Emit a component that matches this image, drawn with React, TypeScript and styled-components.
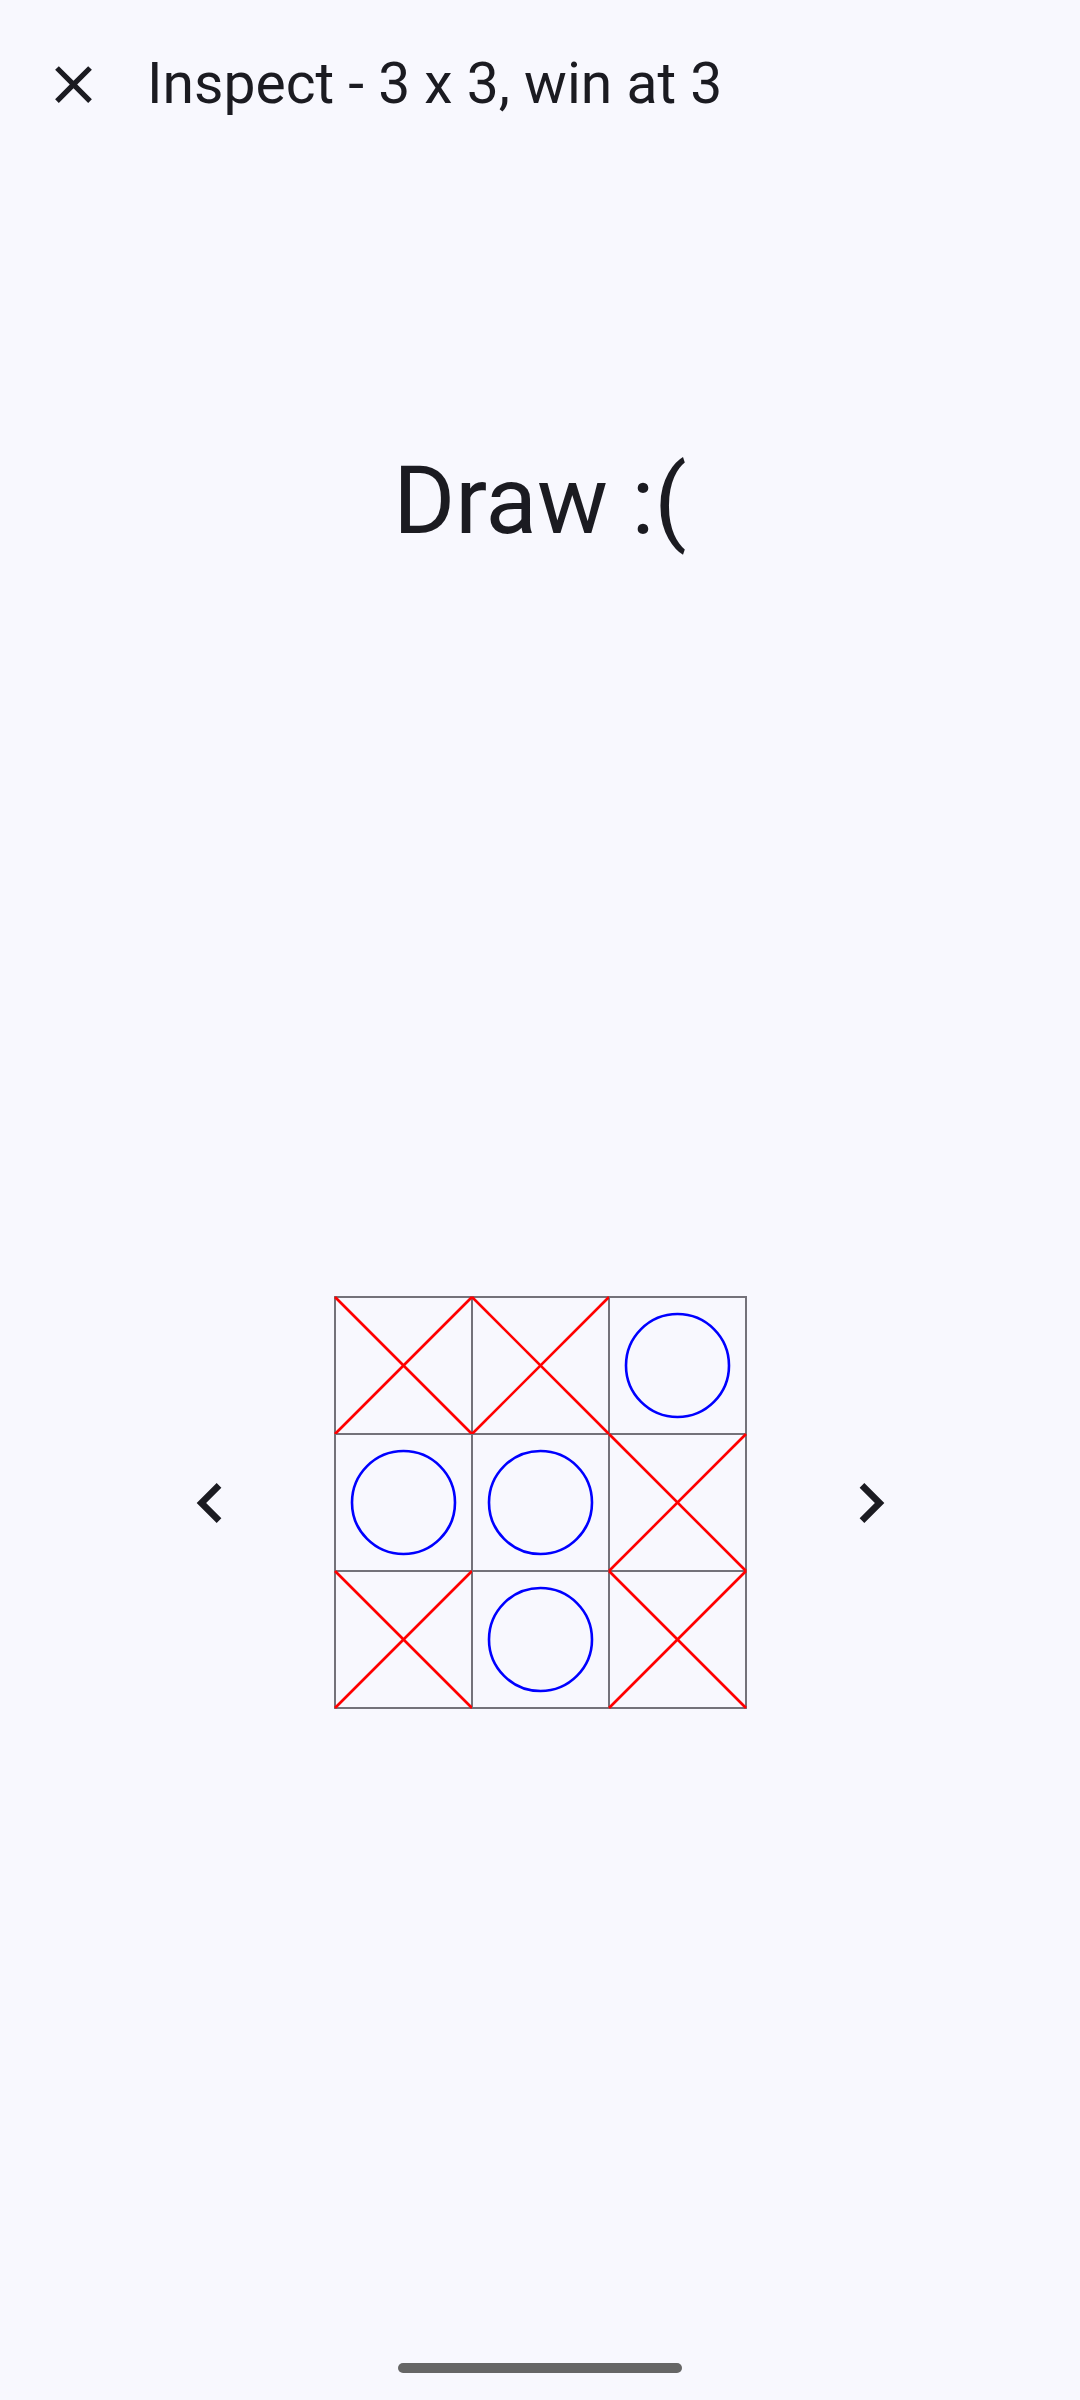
import React from "react";
import styled, { createGlobalStyle } from "styled-components";

const GlobalStyle = createGlobalStyle`
  html, body {
    margin: 0;
    padding: 0;
    background: #f8f8fe;
  }
  body {
    font-family: Roboto, "Noto Sans", "Liberation Sans", sans-serif;
    color: #1b1b21;
  }
`;

const Page = styled.div`
  width: 1080px;
  height: 2400px;
  display: flex;
  flex-direction: column;
  background: #f8f8fe;
  overflow: hidden;
`;

const TopBar = styled.header`
  height: 168px;
  display: flex;
  align-items: center;
  padding-left: 10px;
  box-sizing: border-box;
`;

const IconButton = styled.button`
  width: 126px;
  height: 126px;
  border: none;
  background: transparent;
  padding: 0;
  display: flex;
  align-items: center;
  justify-content: center;
  color: #1b1b21;
  cursor: pointer;
`;

const Title = styled.h1`
  margin: 0 0 0 11px;
  font-size: 57px;
  font-weight: 400;
  line-height: 76px;
  letter-spacing: 0;
  color: #1b1b21;
  white-space: nowrap;
`;

const Result = styled.div`
  margin-top: 278px;
  text-align: center;
  font-size: 94.5px;
  line-height: 110px;
  font-weight: 400;
  color: #1b1b21;
`;

const BoardRow = styled.div`
  margin-top: 740px;
  display: flex;
  align-items: center;
  justify-content: center;
  gap: 84px;
`;

const NavButton = styled.button`
  width: 80px;
  height: 80px;
  border: none;
  background: transparent;
  padding: 0;
  display: flex;
  align-items: center;
  justify-content: center;
  color: #1b1b21;
`;

const Board = styled.div`
  display: grid;
  grid-template-columns: repeat(3, 137px);
  grid-template-rows: repeat(3, 137px);
  border: 1px solid #74727a;
`;

const Cell = styled.div`
  box-sizing: border-box;
  border: 1px solid #74727a;
  position: relative;
  overflow: visible;
`;

const MarkSvg = styled.svg`
  position: absolute;
  inset: -1px;
  width: 137px;
  height: 137px;
  overflow: visible;
`;

const Spacer = styled.div`
  flex: 1;
`;

const HomeBar = styled.div`
  align-self: center;
  width: 284px;
  height: 10px;
  border-radius: 5px;
  background: #666666;
  margin-bottom: 27px;
`;

type Mark = "X" | "O";

const board: Mark[] = ["X", "X", "O", "O", "O", "X", "X", "O", "X"];

const MarkIcon: React.FC<{ mark: Mark }> = ({ mark }) => (
  <MarkSvg viewBox="0 0 137 137">
    {mark === "X" ? (
      <g stroke="#ff0000" strokeWidth={2.6} strokeLinecap="butt">
        <line x1={0} y1={0} x2={137} y2={137} />
        <line x1={137} y1={0} x2={0} y2={137} />
      </g>
    ) : (
      <circle cx={68.5} cy={68.5} r={51.5} fill="none" stroke="#0000ff" strokeWidth={2.6} />
    )}
  </MarkSvg>
);

const CloseIcon = () => (
  <svg width="63" height="63" viewBox="0 0 24 24" fill="currentColor">
    <path d="M19 6.41L17.59 5 12 10.59 6.41 5 5 6.41 10.59 12 5 17.59 6.41 19 12 13.41 17.59 19 19 17.59 13.41 12z" />
  </svg>
);

const ChevronLeft = () => (
  <svg width="80" height="80" viewBox="0 0 24 24" fill="currentColor">
    <path d="M15.41 16.59L10.83 12l4.58-4.59L14 6l-6 6 6 6 1.41-1.41z" />
  </svg>
);

const ChevronRight = () => (
  <svg width="80" height="80" viewBox="0 0 24 24" fill="currentColor">
    <path d="M8.59 16.59L13.17 12 8.59 7.41 10 6l6 6-6 6-1.41-1.41z" />
  </svg>
);

export default function App() {
  return (
    <>
      <GlobalStyle />
      <Page>
        <TopBar>
          <IconButton aria-label="Close">
            <CloseIcon />
          </IconButton>
          <Title>Inspect - 3 x 3, win at 3</Title>
        </TopBar>
        <Result>Draw :(</Result>
        <BoardRow>
          <NavButton aria-label="Previous">
            <ChevronLeft />
          </NavButton>
          <Board>
            {board.map((m, i) => (
              <Cell key={i}>
                <MarkIcon mark={m} />
              </Cell>
            ))}
          </Board>
          <NavButton aria-label="Next">
            <ChevronRight />
          </NavButton>
        </BoardRow>
        <Spacer />
        <HomeBar />
      </Page>
    </>
  );
}
